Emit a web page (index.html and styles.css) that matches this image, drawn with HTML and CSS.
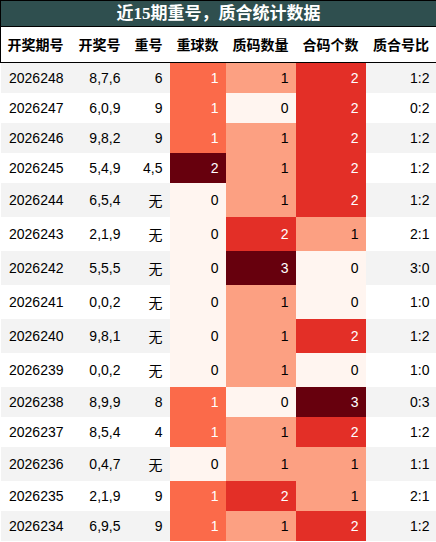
FILE: index.html
```html
<!DOCTYPE html>
<html lang="zh-CN">
<head>
  <meta charset="UTF-8">
  <title>近15期重号，质合统计数据</title>
  <link rel="stylesheet" href="styles.css">
</head>
<body>

  <table class="stats">
    <caption>近15期重号，质合统计数据</caption>
    <colgroup>
      <col class="c-issue"><col class="c-nums"><col class="c-rep">
      <col class="c-cnt"><col class="c-prime"><col class="c-comp"><col class="c-ratio">
    </colgroup>
    <thead>
      <tr>
        <th>开奖期号</th><th>开奖号</th><th>重号</th><th>重球数</th><th>质码数量</th><th>合码个数</th><th>质合号比</th>
      </tr>
    </thead>
    <tbody>
      <tr><td>2026248</td><td>8,7,6</td><td>6</td><td class="h50">1</td><td class="h33">1</td><td class="h67">2</td><td>1:2</td></tr>
      <tr><td>2026247</td><td>6,0,9</td><td>9</td><td class="h50">1</td><td class="h0">0</td><td class="h67">2</td><td>0:2</td></tr>
      <tr><td>2026246</td><td>9,8,2</td><td>9</td><td class="h50">1</td><td class="h33">1</td><td class="h67">2</td><td>1:2</td></tr>
      <tr><td>2026245</td><td>5,4,9</td><td>4,5</td><td class="h100">2</td><td class="h33">1</td><td class="h67">2</td><td>1:2</td></tr>
      <tr><td>2026244</td><td>6,5,4</td><td>无</td><td class="h0">0</td><td class="h33">1</td><td class="h67">2</td><td>1:2</td></tr>
      <tr><td>2026243</td><td>2,1,9</td><td>无</td><td class="h0">0</td><td class="h67">2</td><td class="h33">1</td><td>2:1</td></tr>
      <tr><td>2026242</td><td>5,5,5</td><td>无</td><td class="h0">0</td><td class="h100">3</td><td class="h0">0</td><td>3:0</td></tr>
      <tr><td>2026241</td><td>0,0,2</td><td>无</td><td class="h0">0</td><td class="h33">1</td><td class="h0">0</td><td>1:0</td></tr>
      <tr><td>2026240</td><td>9,8,1</td><td>无</td><td class="h0">0</td><td class="h33">1</td><td class="h67">2</td><td>1:2</td></tr>
      <tr><td>2026239</td><td>0,0,2</td><td>无</td><td class="h0">0</td><td class="h33">1</td><td class="h0">0</td><td>1:0</td></tr>
      <tr><td>2026238</td><td>8,9,9</td><td>8</td><td class="h50">1</td><td class="h0">0</td><td class="h100">3</td><td>0:3</td></tr>
      <tr><td>2026237</td><td>8,5,4</td><td>4</td><td class="h50">1</td><td class="h33">1</td><td class="h67">2</td><td>1:2</td></tr>
      <tr><td>2026236</td><td>0,4,7</td><td>无</td><td class="h0">0</td><td class="h33">1</td><td class="h33">1</td><td>1:1</td></tr>
      <tr><td>2026235</td><td>2,1,9</td><td>9</td><td class="h50">1</td><td class="h67">2</td><td class="h33">1</td><td>2:1</td></tr>
      <tr><td>2026234</td><td>6,9,5</td><td>9</td><td class="h50">1</td><td class="h33">1</td><td class="h67">2</td><td>1:2</td></tr>
    </tbody>
  </table>

</body>
</html>
```

FILE: styles.css
```css
body { margin: 0; background: #fff; font-family: "Liberation Sans", "Noto Sans CJK SC", sans-serif; }
.stats { width: 436px; border-collapse: collapse; table-layout: fixed; font-size: 14px; color: #000; }
.stats caption { background: #2f4f4f; color: #fff; border: 1px solid #000; font-family: "Liberation Serif", "Noto Sans CJK SC", serif; font-weight: bold; font-size: 17px; line-height: 25px; text-align: center; }
.c-issue { width: 70px; }
.c-nums { width: 57px; }
.c-rep { width: 42px; }
.c-cnt { width: 56px; }
.c-prime { width: 70px; }
.c-comp { width: 70px; }
.c-ratio { width: 71px; }
.stats th { font-weight: bold; text-align: right; padding: 7px 7px 8px 0; white-space: nowrap; border-bottom: 1px solid #000; background: #fff; }
.stats th:first-child { border-left: 1px solid #000; }
.stats th:last-child { border-right: 1px solid #000; }
.stats td { text-align: right; padding: 7px 7px 7px 0; white-space: nowrap; }
.stats tbody tr:nth-child(odd) { background: #f3f3f3; }
.stats tbody tr:nth-child(even) { background: #fff; }
.h0 { background: #fff5f0; }
.h33 { background: #fca082; }
.h50 { background: #fb6a4a; color: #fff; }
.h67 { background: #e32f27; color: #fff; }
.h100 { background: #67000d; color: #fff; }
```
